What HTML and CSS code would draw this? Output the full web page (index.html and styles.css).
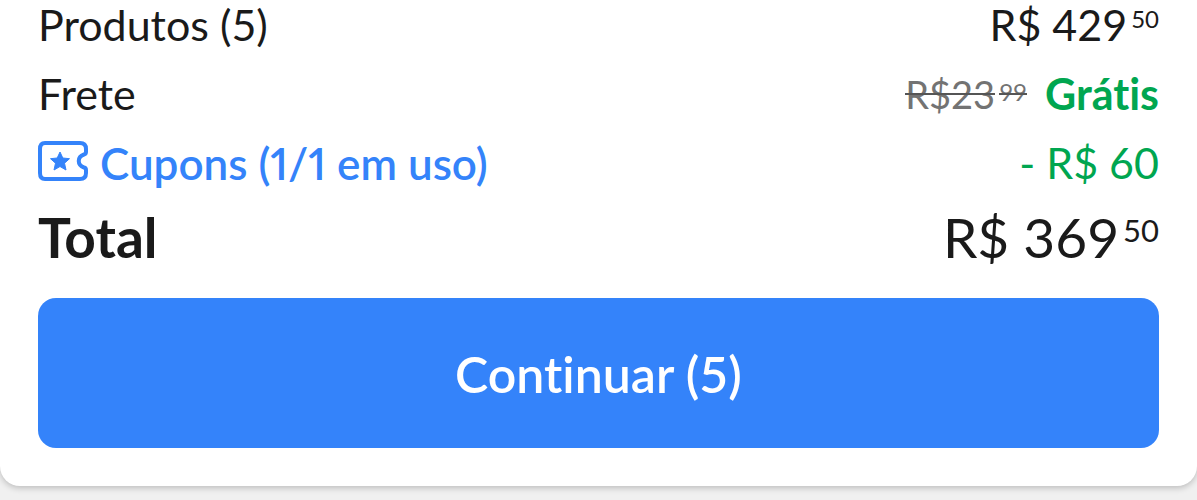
FILE: index.html
```html
<!DOCTYPE html>
<html lang="pt-BR">
<head>
<meta charset="utf-8">
<meta name="viewport" content="width=device-width, initial-scale=1">
<title>Resumo da compra</title>
<link rel="stylesheet" href="styles.css">
</head>
<body>
<main class="summary">
  <dl class="lines">
    <div class="line">
      <dt>Produtos (5)</dt>
      <dd class="price">R$ 429<span class="cents">50</span></dd>
    </div>
    <div class="line">
      <dt>Frete</dt>
      <dd class="shipping"><s class="price old"><span class="struck">R$23</span><span class="cents struck">99</span></s><strong class="free">Grátis</strong></dd>
    </div>
    <div class="line">
      <dt><a class="coupons" href="#cupons">
        <svg class="ticket" viewBox="0 0 50 40" aria-hidden="true">
          <path class="outline" d="M7 2H42Q48 2 48 8V11Q48 13 46 13.500C39 16 39 24 46 26.500Q48 27 48 29V32Q48 38 42 38H7Q2 38 2 32V8Q2 2 7 2Z"/>
          <path class="star" d="M22 11L24.800 17L31.500 17.700L26.500 22.200L28 29L22 25.500L16 29L17.500 22.200L12.500 17.700L19.200 17Z"/>
        </svg>
        <span>Cupons (1/1 em uso)</span></a></dt>
      <dd class="discount">- R$ 60</dd>
    </div>
    <div class="line total">
      <dt>Total</dt>
      <dd class="price">R$ 369<span class="cents">50</span></dd>
    </div>
  </dl>
  <button class="continue" type="button">Continuar (5)</button>
</main>
</body>
</html>
```
FILE: styles.css
```css
* { box-sizing: border-box; }
body {
  min-height: 100vh;
  margin: 0;
  background: #f0f0f0;
  color: #1a1a1a;
  font-family: Lato, "Open Sans", sans-serif;
  font-variant-ligatures: none;
}
.summary {
  padding: 0 38px 38px;
  background: #fff;
  border-radius: 0 0 20px 20px;
  box-shadow: 0 2px 6px #00000038;
}
.lines { margin: 0; font-size: 43px; line-height: 50px; }
.line { display: flex; justify-content: space-between; padding-bottom: 19px; }
.line dd { margin: 0; }
.price { display: flex; align-items: flex-start; }
.cents { margin-left: 4px; font-size: 24px; line-height: 38px; }
.shipping { display: flex; gap: 18px; }
.old { color: #737373; font-size: 38px; text-decoration: none; }
.old .cents { line-height: 46px; }
.struck { position: relative; }
.struck::after { content: ""; position: absolute; top: 24px; left: 0; right: 0; height: 2px; background: #555; }
.free { color: #00a650; font-weight: 700; }
.coupons { display: flex; align-items: flex-start; gap: 12px; color: #3483fa; font-size: 44px; font-weight: 600; font-variant-numeric: proportional-nums; text-decoration: none; }
.ticket { width: 50px; height: 40px; margin-top: 3px; }
.outline { fill: none; stroke: #3483fa; stroke-width: 4; stroke-linejoin: round; }
.star { fill: #3483fa; stroke: #3483fa; stroke-linejoin: round; }
.discount { color: #00a650; }
.total { padding-bottom: 30px; font-size: 55px; line-height: 61px; }
.total dt { font-weight: 700; }
.total .cents { font-size: 31px; line-height: 46px; }
.continue {
  display: block;
  width: 100%;
  padding: 46px 24px 44px;
  border: 0;
  border-radius: 18px;
  background: #3483fa;
  color: #fff;
  font: 600 50px/60px Lato, "Open Sans", sans-serif;
  font-variant-ligatures: none;
}
```
